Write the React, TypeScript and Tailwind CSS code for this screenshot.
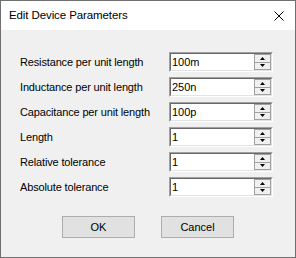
const rows = [
  { label: 'Resistance per unit length', value: '100m' },
  { label: 'Inductance per unit length', value: '250n' },
  { label: 'Capacitance per unit length', value: '100p' },
  { label: 'Length', value: '1' },
  { label: 'Relative tolerance', value: '1' },
  { label: 'Absolute tolerance', value: '1' },
];

const font = { fontFamily: '"Liberation Sans", Arial, sans-serif' };

function Spinner({ value }: { value: string }) {
  return (
    <div className="flex h-[20px] w-[104px] border border-t-[#a0a0a0] border-l-[#a0a0a0] border-r-white border-b-white">
      <div className="flex flex-1 border border-t-[#696969] border-l-[#696969] border-r-[#e3e3e3] border-b-[#e3e3e3] bg-white">
        <div className="flex flex-1 items-center pl-[1px] text-[11px] leading-none text-black">{value}</div>
        <div className="flex w-[17px] flex-col border border-[#a0a0a0] bg-[#f0f0f0]">
          <div className="flex flex-1 items-center justify-center border-b border-[#a0a0a0]">
            <svg width="5" height="3" viewBox="0 0 5 3">
              <path d="M2.5 0 L5 3 L0 3 Z" fill="#000" />
            </svg>
          </div>
          <div className="flex flex-1 items-center justify-center">
            <svg width="5" height="3" viewBox="0 0 5 3">
              <path d="M0 0 L5 0 L2.5 3 Z" fill="#000" />
            </svg>
          </div>
        </div>
      </div>
    </div>
  );
}

export default function App() {
  return (
    <div className="flex h-[258px] w-[296px] flex-col border border-[#707070]" style={font}>
      <div className="flex h-[29px] items-center justify-between bg-white pl-[8px] pr-[11px]">
        <span className="text-[11.5px] tracking-[-0.1px] text-black">Edit Device Parameters</span>
        <svg width="10" height="10" viewBox="0 0 10 10">
          <path d="M0.5 0.5 L9.5 9.5 M9.5 0.5 L0.5 9.5" stroke="#000" strokeWidth="1" />
        </svg>
      </div>
      <div className="flex flex-1 flex-col bg-[#f0f0f0] pt-[22px]">
        <div className="flex flex-col gap-[5px]">
          {rows.map((r) => (
            <div key={r.label} className="flex items-center pl-[19px]">
              <div className="w-[149px] text-[11px] tracking-[-0.15px] text-black">{r.label}</div>
              <Spinner value={r.value} />
            </div>
          ))}
        </div>
        <div className="mt-[19px] flex gap-[26px] pl-[61px]">
          <button className="h-[22px] w-[73px] border border-[#adadad] bg-[#e1e1e1] text-[11px] text-black">OK</button>
          <button className="h-[22px] w-[73px] border border-[#adadad] bg-[#e1e1e1] text-[11px] text-black">Cancel</button>
        </div>
      </div>
    </div>
  );
}
